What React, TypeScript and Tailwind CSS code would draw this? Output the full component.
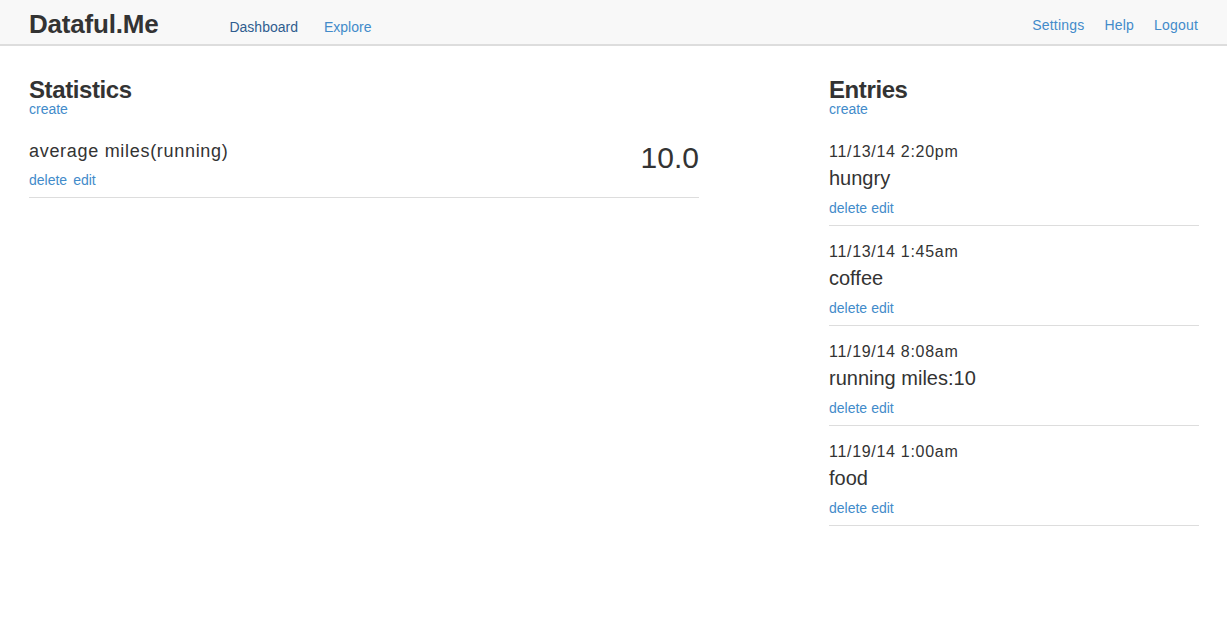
const entries = [
  { date: "11/13/14 2:20pm", text: "hungry" },
  { date: "11/13/14 1:45am", text: "coffee" },
  { date: "11/19/14 8:08am", text: "running miles:10" },
  { date: "11/19/14 1:00am", text: "food" },
];

function Actions({ gap }: { gap: string }) {
  return (
    <div className={`flex ${gap} text-[14px] leading-[18px] text-[#428bca]`}>
      <a href="#">delete</a>
      <a href="#">edit</a>
    </div>
  );
}

export default function App() {
  return (
    <div className="min-h-[630px] bg-white text-[#333] font-['Liberation_Sans',Arial,sans-serif]">
      <nav className="h-[46px] bg-[#f8f8f8] border-b-2 border-[#dddddd] flex items-center pl-[29px] pr-[29px]">
        <span className="text-[26px] font-bold tracking-[-0.2px] text-[#333] leading-none pt-[4px]">Dataful.Me</span>
        <div className="flex gap-[26px] ml-[71px] text-[14px] pt-[11px]">
          <a href="#" className="text-[#2f5d8f]">Dashboard</a>
          <a href="#" className="text-[#428bca]">Explore</a>
        </div>
        <div className="ml-auto flex gap-[20px] text-[14px] tracking-[0.2px] text-[#428bca] pt-[7px]">
          <a href="#">Settings</a>
          <a href="#">Help</a>
          <a href="#">Logout</a>
        </div>
      </nav>

      <main className="flex pl-[29px] pr-[28px] pt-[32px]">
        <section className="w-[670px]">
          <h2 className="text-[24px] font-bold leading-[24px] tracking-[-0.4px]">Statistics</h2>
          <a href="#" className="block text-[14px] leading-[14px] text-[#428bca]">create</a>
          <div className="pt-[24px] pb-[8px] border-b border-[#dddddd] flex justify-between">
            <div>
              <div className="text-[18px] leading-[22px] tracking-[0.7px]">average miles(running)</div>
              <div className="mt-[9px]">
                <Actions gap="gap-[6px]" />
              </div>
            </div>
            <div className="text-[30px] leading-[34px] mt-[1px]">10.0</div>
          </div>
        </section>

        <section className="w-[370px] ml-auto">
          <h2 className="text-[24px] font-bold leading-[24px] tracking-[-0.4px]">Entries</h2>
          <a href="#" className="block text-[14px] leading-[14px] text-[#428bca]">create</a>
          <div className="pt-[10px]">
            {entries.map((e) => (
              <div key={e.date} className="pt-[16px] pb-[8px] border-b border-[#dddddd]">
                <div className="text-[16px] leading-[20px] tracking-[0.7px]">{e.date}</div>
                <div className="text-[20px] leading-[24px] mt-[4px]">{e.text}</div>
                <div className="mt-[9px]">
                  <Actions gap="gap-[4px]" />
                </div>
              </div>
            ))}
          </div>
        </section>
      </main>
    </div>
  );
}
